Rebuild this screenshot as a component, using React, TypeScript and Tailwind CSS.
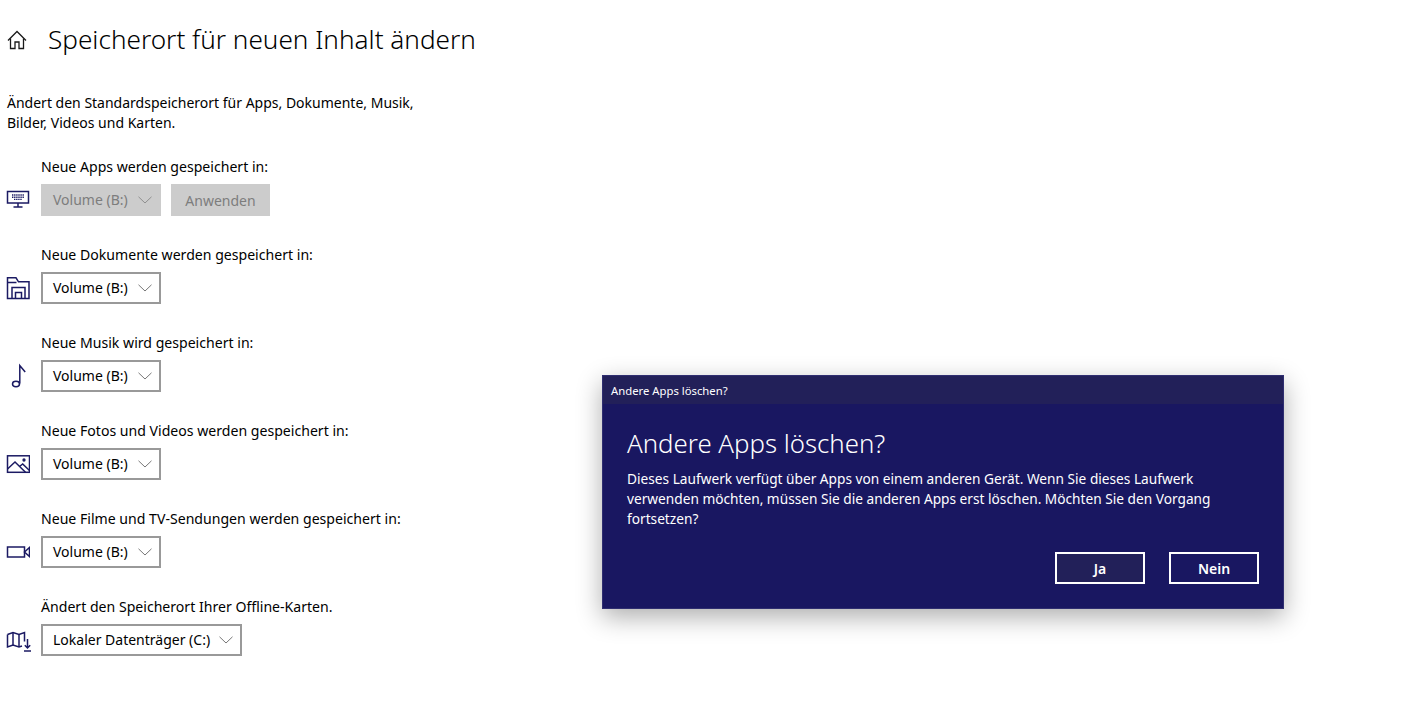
const font = "font-['Noto_Sans','Open_Sans',sans-serif]";

function Chevron({ className }: { className?: string }) {
  return (
    <svg width="14" height="8" viewBox="0 0 14 8" fill="none" stroke="currentColor" className={className}>
      <path d="M0.5 0.8 L7 7 L13.500 0.8" />
    </svg>
  );
}

function Select({ value, disabled, width }: { value: string; disabled?: boolean; width: string }) {
  if (disabled) {
    return (
      <div className={`flex h-8 items-center justify-between bg-[#cccccc] pl-3 pr-[9px] text-[14px] text-[#7d7d7d] ${width}`}>
        <span className="pb-[2px]">{value}</span>
        <Chevron className="text-[#8f8f8f]" />
      </div>
    );
  }
  return (
    <div className={`flex h-8 items-center justify-between border-2 border-[#999999] bg-white pl-[10px] pr-[7px] text-[14px] text-black ${width}`}>
      <span className="pb-[2px]">{value}</span>
      <Chevron className="text-[#777777]" />
    </div>
  );
}

const iconStroke = { fill: "none", stroke: "#1b1a63", strokeWidth: 1.5 };

function KeyboardIcon() {
  return (
    <svg width="24" height="20" viewBox="0 0 24 20" {...iconStroke}>
      <rect x="1.500" y="1.500" width="21" height="11.500" />
      <path d="M12 13v3.500M7.500 17h9" />
      <path d="M6 5h12M6 7.200h12M8 9.400h8" strokeDasharray="1.400 0.700" strokeWidth="1.400" />
    </svg>
  );
}

function FolderIcon() {
  return (
    <svg width="24" height="24" viewBox="0 0 24 24" {...iconStroke}>
      <path d="M1.500 22.500V1.800h8.500l2.500 4h10.500v16.700z" />
      <path d="M1.500 6.500h9" />
      <path d="M6 22.500V11.500h13v11" />
      <path d="M9.500 22.500v-6h6v6" />
    </svg>
  );
}

function MusicIcon() {
  return (
    <svg width="24" height="28" viewBox="0 0 24 28" {...iconStroke}>
      <ellipse cx="10" cy="22" rx="3.500" ry="2.700" />
      <path d="M13.800 21.500V3.500l5.400 6.500" />
    </svg>
  );
}

function PictureIcon() {
  return (
    <svg width="24" height="20" viewBox="0 0 24 20" {...iconStroke}>
      <rect x="1.500" y="1.800" width="22" height="16.500" />
      <path d="M1.500 15l7.500-7 10.500 10.300" />
      <path d="M13.500 12.500l3.200-2.500 6.800 6.500" />
      <circle cx="18" cy="6" r="0.900" />
    </svg>
  );
}

function VideoIcon() {
  return (
    <svg width="24" height="16" viewBox="0 0 24 16" {...iconStroke}>
      <rect x="1.500" y="3" width="17" height="10" />
      <path d="M18.500 8l5-4.500v9z" />
    </svg>
  );
}

function MapIcon() {
  return (
    <svg width="26" height="24" viewBox="0 0 26 24" {...iconStroke}>
      <path d="M1.500 6.500l5.500-2 6 2 5.500-2v9" />
      <path d="M1.500 6.500V19l5.500-2 6 2 3-1" />
      <path d="M7 4.500V17M13 6.500V19" />
      <path d="M21.500 11v9M18.800 17.200l2.700 2.800 2.700-2.800M18 23h7" />
    </svg>
  );
}

function Row({
  label,
  icon,
  children,
}: {
  label: string;
  icon: React.ReactNode;
  children: React.ReactNode;
}) {
  return (
    <div className="flex h-[88px] flex-col">
      <div className="h-[32px] pl-[41px] pt-[5px] text-[14.1px] leading-[20px] text-black">{label}</div>
      <div className="flex items-center">
        <div className="flex w-[41px] justify-start pl-[6px]">{icon}</div>
        {children}
      </div>
    </div>
  );
}

export default function App() {
  return (
    <div className={`relative h-[724px] w-[1420px] overflow-hidden bg-white ${font}`}>
      {/* Header */}
      <div className="flex h-[78px] items-center pl-[7px]">
        <svg width="20" height="20" viewBox="0 0 20 20" fill="none" stroke="#1a1a1a" strokeWidth="1.300" className="mt-[1px]">
          <path d="M1 10.500L10 1.500l9 9" />
          <path d="M3.500 8.500V18.500h4.500V12h4v6.500h4.500V8.500" />
        </svg>
        <h1 className="ml-[21px] text-[26.150px] font-light leading-none text-black">Speicherort für neuen Inhalt ändern</h1>
      </div>

      <p className="mt-[15px] h-[52px] pl-[7px] text-[14px] leading-[20px] text-black">
        Ändert den Standardspeicherort für Apps, Dokumente, Musik,
        <br />
        Bilder, Videos und Karten.
      </p>

      <div className="mt-[7px]">
        <Row label="Neue Apps werden gespeichert in:" icon={<KeyboardIcon />}>
          <Select value="Volume (B:)" width="w-[120px]" disabled />
          <div className="ml-[10px] flex h-8 w-[99px] items-center justify-center bg-[#cccccc] text-[14px] text-[#7d7d7d]">
            Anwenden
          </div>
        </Row>
        <Row label="Neue Dokumente werden gespeichert in:" icon={<FolderIcon />}>
          <Select value="Volume (B:)" width="w-[120px]" />
        </Row>
        <Row label="Neue Musik wird gespeichert in:" icon={<MusicIcon />}>
          <Select value="Volume (B:)" width="w-[120px]" />
        </Row>
        <Row label="Neue Fotos und Videos werden gespeichert in:" icon={<PictureIcon />}>
          <Select value="Volume (B:)" width="w-[120px]" />
        </Row>
        <Row label="Neue Filme und TV-Sendungen werden gespeichert in:" icon={<VideoIcon />}>
          <Select value="Volume (B:)" width="w-[120px]" />
        </Row>
        <Row label="Ändert den Speicherort Ihrer Offline-Karten." icon={<MapIcon />}>
          <Select value="Lokaler Datenträger (C:)" width="w-[201px]" />
        </Row>
      </div>

      {/* Dialog */}
      <div className="absolute left-[602px] top-[375px] h-[234px] w-[682px] border border-[#2f2e70] bg-[#191761] text-white shadow-[0_8px_24px_rgba(0,0,0,0.32)]">
        <div className="flex h-[28px] items-center bg-[#222059] pl-2 pt-[3px] text-[11.300px]">Andere Apps löschen?</div>
        <div className="px-6 pt-[23px]">
          <h2 className="text-[25.800px] font-light leading-[32px]">Andere Apps löschen?</h2>
          <p className="mt-[10px] text-[13.700px] leading-[20px]">
            Dieses Laufwerk verfügt über Apps von einem anderen Gerät. Wenn Sie dieses Laufwerk
            <br />
            verwenden möchten, müssen Sie die anderen Apps erst löschen. Möchten Sie den Vorgang
            <br />
            fortsetzen?
          </p>
          <div className="mt-[23px] flex justify-end gap-6">
            <button className="h-8 w-[90px] border-2 border-white bg-[#222059] text-[14px] font-semibold">Ja</button>
            <button className="h-8 w-[90px] border-2 border-white text-[14px] font-semibold">Nein</button>
          </div>
        </div>
      </div>
    </div>
  );
}
